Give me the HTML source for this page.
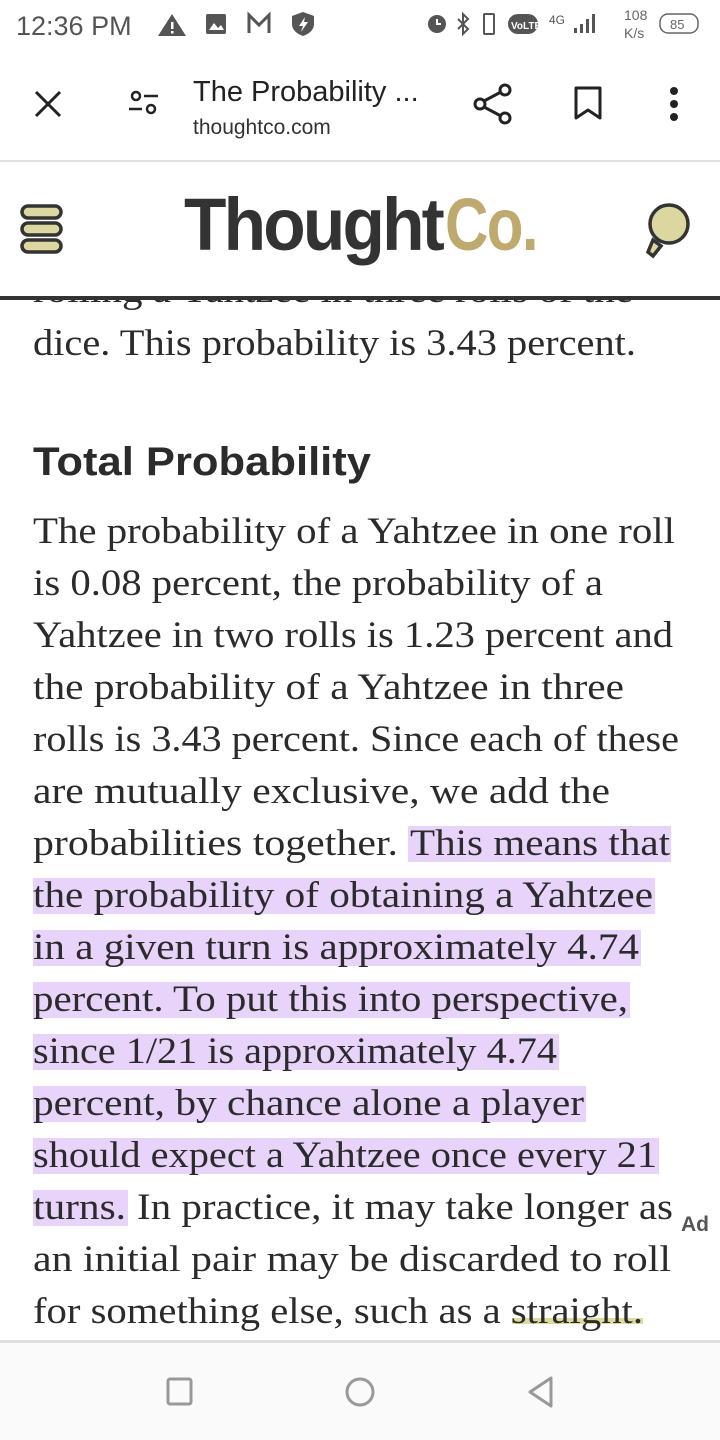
<!DOCTYPE html>
<html><head><meta charset="utf-8"><style>
html,body{margin:0;padding:0;background:#fff;width:720px;height:1440px;overflow:hidden;font-family:"Liberation Sans",sans-serif}
svg{position:absolute;left:0;top:0}
</style></head><body>
<svg width="720" height="1440" viewBox="0 0 720 1440" xmlns="http://www.w3.org/2000/svg">
<g font-family="'Liberation Serif','DejaVu Serif',serif" font-size="37" fill="#2b2b2b">
<text x="33" y="302" textLength="600" lengthAdjust="spacingAndGlyphs">rolling a Yahtzee in three rolls of the</text>
<text x="33" y="355" textLength="603" lengthAdjust="spacingAndGlyphs">dice. This probability is 3.43 percent.</text>
</g>
<text x="33" y="475" font-family="'Liberation Sans',sans-serif" font-weight="bold" font-size="40" fill="#2b2b2b" textLength="338" lengthAdjust="spacingAndGlyphs">Total Probability</text>
<g fill="#e8d4fb">
<rect x="408" y="826" width="263" height="36"/>
<rect x="33" y="878" width="622" height="36"/>
<rect x="33" y="930" width="608" height="36"/>
<rect x="33" y="982" width="597" height="36"/>
<rect x="33" y="1034" width="526" height="36"/>
<rect x="33" y="1086" width="553" height="36"/>
<rect x="33" y="1138" width="626" height="36"/>
<rect x="33" y="1190" width="95" height="36"/>
</g>
<rect x="512" y="1318" width="131" height="6" fill="#dedaa0"/>
<g font-family="'Liberation Serif','DejaVu Serif',serif" font-size="37" fill="#2b2b2b">
<text x="33" y="543" textLength="642" lengthAdjust="spacingAndGlyphs">The probability of a Yahtzee in one roll</text>
<text x="33" y="595" textLength="570" lengthAdjust="spacingAndGlyphs">is 0.08 percent, the probability of a</text>
<text x="33" y="647" textLength="640" lengthAdjust="spacingAndGlyphs">Yahtzee in two rolls is 1.23 percent and</text>
<text x="33" y="699" textLength="591" lengthAdjust="spacingAndGlyphs">the probability of a Yahtzee in three</text>
<text x="33" y="751" textLength="646" lengthAdjust="spacingAndGlyphs">rolls is 3.43 percent. Since each of these</text>
<text x="33" y="803" textLength="577" lengthAdjust="spacingAndGlyphs">are mutually exclusive, we add the</text>
<text x="33" y="855" textLength="365" lengthAdjust="spacingAndGlyphs">probabilities together.</text>
<text x="410" y="855" textLength="260" lengthAdjust="spacingAndGlyphs">This means that</text>
<text x="33" y="907" textLength="620" lengthAdjust="spacingAndGlyphs">the probability of obtaining a Yahtzee</text>
<text x="33" y="959" textLength="606" lengthAdjust="spacingAndGlyphs">in a given turn is approximately 4.74</text>
<text x="33" y="1011" textLength="595" lengthAdjust="spacingAndGlyphs">percent. To put this into perspective,</text>
<text x="33" y="1063" textLength="524" lengthAdjust="spacingAndGlyphs">since 1/21 is approximately 4.74</text>
<text x="33" y="1115" textLength="551" lengthAdjust="spacingAndGlyphs">percent, by chance alone a player</text>
<text x="33" y="1167" textLength="624" lengthAdjust="spacingAndGlyphs">should expect a Yahtzee once every 21</text>
<text x="33" y="1219" textLength="93" lengthAdjust="spacingAndGlyphs">turns.</text>
<text x="137" y="1219" textLength="536" lengthAdjust="spacingAndGlyphs">In practice, it may take longer as</text>
<text x="33" y="1271" textLength="638" lengthAdjust="spacingAndGlyphs">an initial pair may be discarded to roll</text>
<text x="33" y="1323" textLength="610" lengthAdjust="spacingAndGlyphs">for something else, such as a straight.</text>
</g>
<text x="681" y="1231" font-family="'Liberation Sans',sans-serif" font-weight="bold" font-size="21" fill="#555">Ad</text>

<rect x="0" y="0" width="720" height="296" fill="#fff"/>
<rect x="0" y="160" width="720" height="2" fill="#e0e0e0"/>
<rect x="0" y="296" width="720" height="4" fill="#333"/>
<text x="16" y="35" font-size="27" fill="#555">12:36 PM</text>
<path d="M172 14 L186 36 L158 36 Z" fill="#555"/><rect x="171" y="22" width="2.5" height="7" fill="#fff"/><rect x="171" y="31" width="2.5" height="2.5" fill="#fff"/>
<rect x="206" y="14" width="20" height="20" rx="2" fill="#555"/><path d="M209 30 L214 23 L218 28 L221 25 L224 30 Z" fill="#fff"/>
<path d="M249 33 V15 L259 25 L269 15 V33" fill="none" stroke="#555" stroke-width="3"/>
<path d="M303 12 L314 16 V24 C314 30 309 34 303 36 C297 34 292 30 292 24 V16 Z" fill="#555"/><path d="M305 17 L299 26 H303 L301 32 L308 22 H304 Z" fill="#fff"/>
<circle cx="437" cy="24" r="9" fill="#555"/><path d="M437 19 V24 H441" stroke="#fff" stroke-width="2" fill="none"/>
<path d="M458 19 L468 29 L463 34 V14 L468 19 L458 29" fill="none" stroke="#555" stroke-width="2"/>
<rect x="484" y="14" width="10" height="20" rx="1" fill="none" stroke="#555" stroke-width="2"/>
<rect x="508" y="14" width="30" height="20" rx="10" fill="#555"/><text x="511" y="29" font-size="10" fill="#fff" font-weight="bold">VoLTE</text>
<text x="549" y="24" font-size="12" fill="#555">4G</text>
<rect x="574" y="28" width="3" height="5" fill="#555"/><rect x="580" y="24" width="3" height="9" fill="#555"/><rect x="586" y="19" width="3" height="14" fill="#555"/><rect x="592" y="14" width="3" height="19" fill="#555"/>
<text x="624" y="20" font-size="14" fill="#666">108</text><text x="624" y="38" font-size="14" fill="#666">K/s</text>
<rect x="660" y="14" width="38" height="19" rx="8" fill="none" stroke="#666" stroke-width="1.5"/><text x="670" y="29" font-size="13" fill="#666">85</text>
<path d="M36 92 L60 116 M60 92 L36 116" stroke="#222" stroke-width="3"/>
<circle cx="136" cy="96" r="4" fill="none" stroke="#222" stroke-width="2.5"/><path d="M144 96 H158 M129 109 H142" stroke="#222" stroke-width="2.5"/><circle cx="151" cy="109" r="4" fill="none" stroke="#222" stroke-width="2.5"/>
<text x="193" y="101" font-size="29" fill="#222">The Probability ...</text>
<text x="193" y="134" font-size="21" fill="#333">thoughtco.com</text>
<circle cx="505" cy="90" r="5" fill="none" stroke="#222" stroke-width="3"/><circle cx="480" cy="104" r="5" fill="none" stroke="#222" stroke-width="3"/><circle cx="505" cy="118" r="5" fill="none" stroke="#222" stroke-width="3"/><path d="M484 101 L501 92 M484 107 L501 116" stroke="#222" stroke-width="3"/>
<path d="M576 88 H600 V118 L588 110 L576 118 Z" fill="none" stroke="#222" stroke-width="3" stroke-linejoin="round"/>
<circle cx="674" cy="91" r="4" fill="#222"/><circle cx="674" cy="104" r="4" fill="#222"/><circle cx="674" cy="117" r="4" fill="#222"/>
<g fill="#dcd7a0" stroke="#333" stroke-width="3.5">
<rect x="22" y="206" width="39" height="12" rx="6"/><rect x="22" y="223" width="39" height="12" rx="6"/><rect x="22" y="240" width="39" height="12" rx="6"/>
<path d="M653 240 L648 252 L653 256 L661 246 Z"/>
<circle cx="669" cy="224" r="19"/>
</g>
<text x="184" y="250" font-size="74" font-weight="bold" fill="#333" letter-spacing="-3" textLength="258" lengthAdjust="spacingAndGlyphs">Thought</text>
<text x="445" y="250" font-size="74" font-weight="bold" fill="#bea96e" letter-spacing="-2" textLength="92" lengthAdjust="spacingAndGlyphs">Co.</text>
<rect x="0" y="1340" width="720" height="100" fill="#fafafa"/>
<rect x="0" y="1340" width="720" height="3" fill="#ddd"/>
<rect x="168" y="1379" width="23" height="25" rx="2" fill="none" stroke="#999" stroke-width="3"/>
<circle cx="360" cy="1392" r="13" fill="none" stroke="#999" stroke-width="3"/>
<path d="M551 1378 L530 1392 L551 1406 Z" fill="none" stroke="#999" stroke-width="3" stroke-linejoin="round"/>
</svg>
</body></html>
